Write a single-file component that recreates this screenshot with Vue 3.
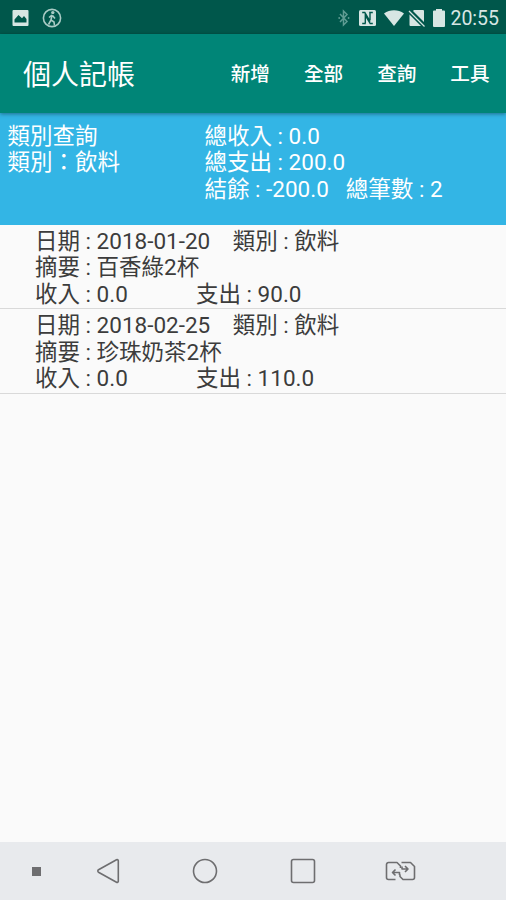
<template>
  <div class="screen">
    <header class="status-bar">
      <div class="status-left">
        <svg class="icon-photo" viewBox="0 0 16 16">
          <path fill-rule="evenodd" d="M1 0h14a1 1 0 0 1 1 1v14a1 1 0 0 1-1 1H1a1 1 0 0 1-1-1V1a1 1 0 0 1 1-1zM2 12.500h12V9l-2.500-3-2 2.200L6 5 2 9.500z" />
        </svg>
        <svg class="icon-walk" viewBox="0 0 20 20">
          <circle cx="10" cy="10" r="8.600" />
          <circle class="solid" cx="10.800" cy="4.600" r="1.700" />
          <path d="M10 7l-1 5 3 2 .5 3.500M9 12l-2.500 4.500M10 7l-3 2.500M10.500 7.500l2.500 3" />
        </svg>
      </div>
      <div class="status-right">
        <svg class="icon-bluetooth" viewBox="0 0 12 18">
          <path d="M2 5l7 7.500-3.500 3.500V2L9 5.500 2 13" />
          <circle cx="1.200" cy="9" r=".9" />
          <circle cx="10.600" cy="9" r=".9" />
        </svg>
        <svg class="icon-nfc" viewBox="0 0 17 16">
          <rect width="17" height="16" rx="1.500" />
          <path d="M6.800 13.500H3.200M3.200 2.500h2.600l5.400 9M10.200 2.500h3.600M13.800 13.500h-2.600L6.300 5.500V13M11 3v7" />
        </svg>
        <svg class="icon-wifi" viewBox="0 0 20 16">
          <path d="M0 3.500C6-.8 14-.8 20 3.500L10 16z" />
        </svg>
        <svg class="icon-sim" viewBox="0 0 18 18">
          <path d="M6 1h9a1 1 0 0 1 1 1v11L5 2zM1.500 5.500L13 17H2.500a1 1 0 0 1-1-1z" />
          <path class="slash" d="M1 2l15.500 15.500" />
        </svg>
        <svg class="icon-battery" viewBox="0 0 12 18">
          <path d="M3 0h6v1.500h2a1 1 0 0 1 1 1V17a1 1 0 0 1-1 1H1a1 1 0 0 1-1-1V2.500a1 1 0 0 1 1-1h2z" />
        </svg>
        <span class="clock">20:55</span>
      </div>
    </header>

    <nav class="toolbar">
      <h1 class="title">個人記帳</h1>
      <div class="menu">
        <span v-for="item in menu" :key="item">{{ item }}</span>
      </div>
    </nav>

    <section class="summary">
      <div class="summary-query">
        <div>類別查詢</div>
        <div>類別：{{ category }}</div>
      </div>
      <div class="summary-total">
        <div>總收入 : {{ money(totalIncome) }}</div>
        <div>總支出 : {{ money(totalExpense) }}</div>
        <div>
          <span>結餘 : {{ money(totalIncome - totalExpense) }}</span>
          <span class="count">總筆數 : {{ records.length }}</span>
        </div>
      </div>
    </section>

    <ul class="records">
      <li v-for="record in records" :key="record.date" class="record">
        <div class="line">
          <span>日期 : {{ record.date }}</span>
          <span class="record-category">類別 : {{ record.category }}</span>
        </div>
        <div class="line">摘要 : {{ record.note }}</div>
        <div class="line">
          <span class="income">收入 : {{ money(record.income) }}</span>
          <span>支出 : {{ money(record.expense) }}</span>
        </div>
      </li>
    </ul>

    <footer class="nav-bar">
      <span class="nav-dot"></span>
      <svg class="nav-back" viewBox="0 0 24 26">
        <path d="M20.500 1.800L2.500 11.800a1.400 1.400 0 0 0 0 2.400l18 10a1.200 1.200 0 0 0 1.800-1V2.800a1.200 1.200 0 0 0-1.800-1z" />
      </svg>
      <svg class="nav-home" viewBox="0 0 26 26">
        <circle cx="13" cy="13" r="11.500" />
      </svg>
      <svg class="nav-recent" viewBox="0 0 26 26">
        <rect x="1.500" y="1.500" width="23" height="23" rx="2" />
      </svg>
      <svg class="nav-switch" viewBox="0 0 31 20">
        <path d="M10.500 18.500H3.500a2 2 0 0 1-2-2v-13a2 2 0 0 1 2-2h8.500l3.500 3.500v2M16.500 1.500h9l4 4v11a2 2 0 0 1-2 2H18l-3-3v-2" />
        <path d="M14.500 14v-2.500H8M10.500 8.500l-3 3 3 3M17 5.500V8h5M20 5l3 3-3 3" />
      </svg>
    </footer>
  </div>
</template>

<script setup>
import { ref, computed } from 'vue';

const menu = ['新增', '全部', '查詢', '工具'];
const category = ref('飲料');

const records = ref([
  { date: '2018-01-20', category: '飲料', note: '百香綠2杯', income: 0, expense: 90 },
  { date: '2018-02-25', category: '飲料', note: '珍珠奶茶2杯', income: 0, expense: 110 }
]);

const totalIncome = computed(() => records.value.reduce((sum, r) => sum + r.income, 0));
const totalExpense = computed(() => records.value.reduce((sum, r) => sum + r.expense, 0));

const money = (value) => value.toFixed(1);
</script>

<style>
body {
  margin: 0;
}
</style>

<style scoped>
.screen {
  display: flex;
  flex-direction: column;
  height: 900px;
  overflow: hidden;
  background: #fafafa;
  font-family: Roboto, 'Noto Sans CJK TC', sans-serif;
  font-size: 22.5px;
  line-height: 26.4px;
}

/* Status bar */
.status-bar {
  display: flex;
  flex: none;
  align-items: center;
  justify-content: space-between;
  box-sizing: border-box;
  height: 34px;
  padding: 2px 7px 0 12px;
  background: #00574b;
  color: #d7e6e3;
}

.status-bar svg {
  fill: #d7e6e3;
}

.status-left,
.status-right {
  display: flex;
  align-items: center;
}

.icon-photo {
  width: 17px;
  height: 16px;
  margin-right: 13px;
}

.status-bar .icon-walk {
  width: 20px;
  height: 20px;
  fill: none;
  stroke: #a9cbc5;
  stroke-width: 1.6;
}

.icon-walk .solid {
  fill: #a9cbc5;
  stroke: none;
}

.icon-bluetooth {
  width: 12px;
  height: 18px;
  margin-right: 9px;
}

.icon-bluetooth path {
  fill: none;
  stroke: #5f9c93;
  stroke-width: 1.5;
}

.icon-bluetooth circle {
  fill: #5f9c93;
}

.icon-nfc {
  width: 17px;
  height: 16px;
  margin-right: 8px;
}

.icon-nfc path {
  fill: none;
  stroke: #00574b;
  stroke-width: 1.4;
}

.icon-wifi {
  width: 20px;
  height: 16px;
  margin-right: 4px;
}

.icon-sim {
  width: 18px;
  height: 18px;
  margin-right: 7px;
}

.icon-sim .slash {
  stroke: #d7e6e3;
  stroke-width: 1.2;
}

.icon-battery {
  width: 12px;
  height: 18px;
  margin-right: 5px;
}

.clock {
  padding-top: 2px;
  font-size: 19.5px;
}

/* Toolbar */
.toolbar {
  position: relative;
  display: flex;
  flex: none;
  align-items: center;
  justify-content: space-between;
  box-sizing: border-box;
  height: 79px;
  padding: 4px 16.5px 0 23px;
  background: #008577;
  color: #fff;
  box-shadow: 0 1px 4px rgba(0, 0, 0, 0.4);
}

.title {
  margin: 0;
  font-size: 28px;
  font-weight: 400;
  line-height: 36px;
}

.menu {
  display: flex;
  gap: 34px;
  font-size: 19.6px;
  font-weight: 500;
}

/* Query summary */
.summary {
  display: flex;
  flex: none;
  box-sizing: border-box;
  height: 112px;
  padding: 10px 7.5px 0;
  background: #33b5e5;
  color: #fff;
}

.summary-query {
  width: 197px;
}

.count {
  margin-left: 17px;
}

/* Record list */
.records {
  flex: 1;
  margin: 0;
  padding: 0;
  list-style: none;
  color: #3c3c3c;
}

.record {
  box-sizing: border-box;
  height: 84.4px;
  padding: 3px 0 0 35px;
  border-bottom: 1.500px solid #d9d9d9;
}

.line {
  display: flex;
}

.record-category {
  margin-left: 22.5px;
}

.income {
  width: 161px;
}

/* Navigation bar */
.nav-bar {
  display: flex;
  flex: none;
  align-items: center;
  box-sizing: border-box;
  height: 58px;
  padding-left: 32px;
  background: #e8eaed;
}

.nav-bar svg {
  fill: none;
  stroke: #6e6e70;
  stroke-width: 1.6;
  stroke-linejoin: round;
}

.nav-dot {
  width: 9px;
  height: 9px;
  background: #6e6e70;
}

.nav-back {
  width: 24px;
  height: 26px;
  margin-left: 55px;
}

.nav-home {
  width: 26px;
  height: 26px;
  margin-left: 72px;
}

.nav-recent {
  width: 26px;
  height: 26px;
  margin-left: 72px;
}

.nav-switch {
  width: 31px;
  height: 20px;
  margin-left: 69px;
}
</style>
